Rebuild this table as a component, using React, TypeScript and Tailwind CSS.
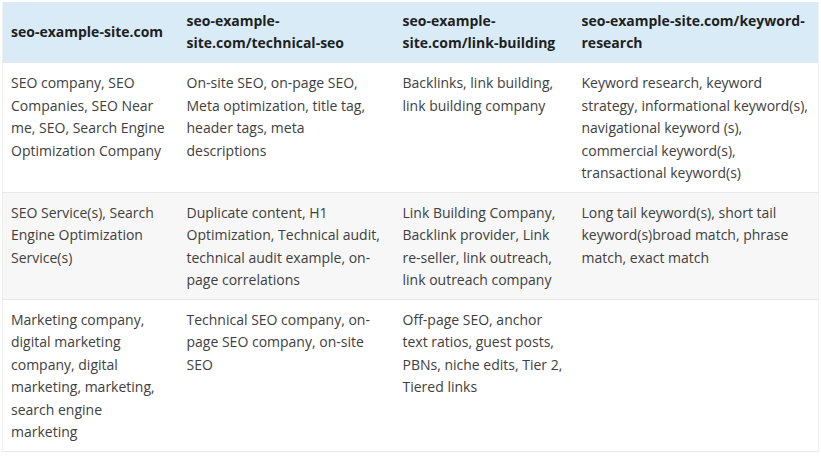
import type { JSX } from 'react';

const headers = [
    'seo-example-site.com',
    'seo-example-site.com/technical-seo',
    'seo-example-site.com/link-building',
    'seo-example-site.com/keyword-research',
];

const rows: string[][] = [
    [
        'SEO company, SEO Companies, SEO Near me, SEO, Search Engine Optimization Company',
        'On-site SEO, on-page SEO, Meta optimization, title tag, header tags, meta descriptions',
        'Backlinks, link building, link building company',
        'Keyword research, keyword strategy, informational keyword(s), navigational keyword (s), commercial keyword(s), transactional keyword(s)',
    ],
    [
        'SEO Service(s), Search Engine Optimization Service(s)',
        'Duplicate content, H1 Optimization, Technical audit, technical audit example, on-page correlations',
        'Link Building Company, Backlink provider, Link re-seller, link outreach, link outreach company',
        'Long tail keyword(s), short tail keyword(s)broad match, phrase match, exact match',
    ],
    [
        'Marketing company, digital marketing company, digital marketing, marketing, search engine marketing',
        'Technical SEO company, on-page SEO company, on-site SEO',
        'Off-page SEO, anchor text ratios, guest posts, PBNs, niche edits, Tier 2, Tiered links',
        '',
    ],
];

// last column sits close to the table edge
const padX = ['pl-[8px] pr-[9px]', 'pl-[8px] pr-[9px]', 'pl-[8px] pr-[9px]', 'pl-[8px] pr-[3px]'];

// header cells break after the hyphen like the source page does
function splitHeader(h: string): JSX.Element {
    return <>{h.split('-').map((part, i, arr) => (
        <span key={i}>{part}{i < arr.length - 1 ? '-' : ''}<wbr /></span>
    ))}</>;
}

export default function App(): JSX.Element {
    return (
        <div className="w-[821px] h-[458px] bg-white px-[2px] pt-[2px] font-['Open_Sans',sans-serif]">
            <table className="w-[816px] table-fixed border-collapse border-x border-b border-[#f0f0f0]">
                <colgroup>
                    <col className="w-[176px]" />
                    <col className="w-[216px]" />
                    <col className="w-[179px]" />
                    <col className="w-[245px]" />
                </colgroup>
                <thead>
                    <tr className="bg-[#d9ebf6] border-b border-[#e4e9ec]">
                        {headers.map((h, hi) => (
                            <th
                                key={h}
                                className={`${padX[hi]} h-[60px] py-[8px] text-left align-middle text-[14px] leading-[22px] font-bold text-[#1f1f1f]`}
                            >
                                {splitHeader(h)}
                            </th>
                        ))}
                    </tr>
                </thead>
                <tbody>
                    {rows.map((row, ri) => (
                        <tr
                            key={ri}
                            className={`${ri === 1 ? 'bg-[#f7f7f7]' : 'bg-white'} border-b border-[#e8e8e8]`}
                        >
                            {row.map((cell, ci) => (
                                <td
                                    key={ci}
                                    className={`${padX[ci]} pt-[9px] pb-[7px] align-top text-[14px] leading-[22.5px] text-[#404040]`}
                                >
                                    {cell}
                                </td>
                            ))}
                        </tr>
                    ))}
                </tbody>
            </table>
        </div>
    );
}
